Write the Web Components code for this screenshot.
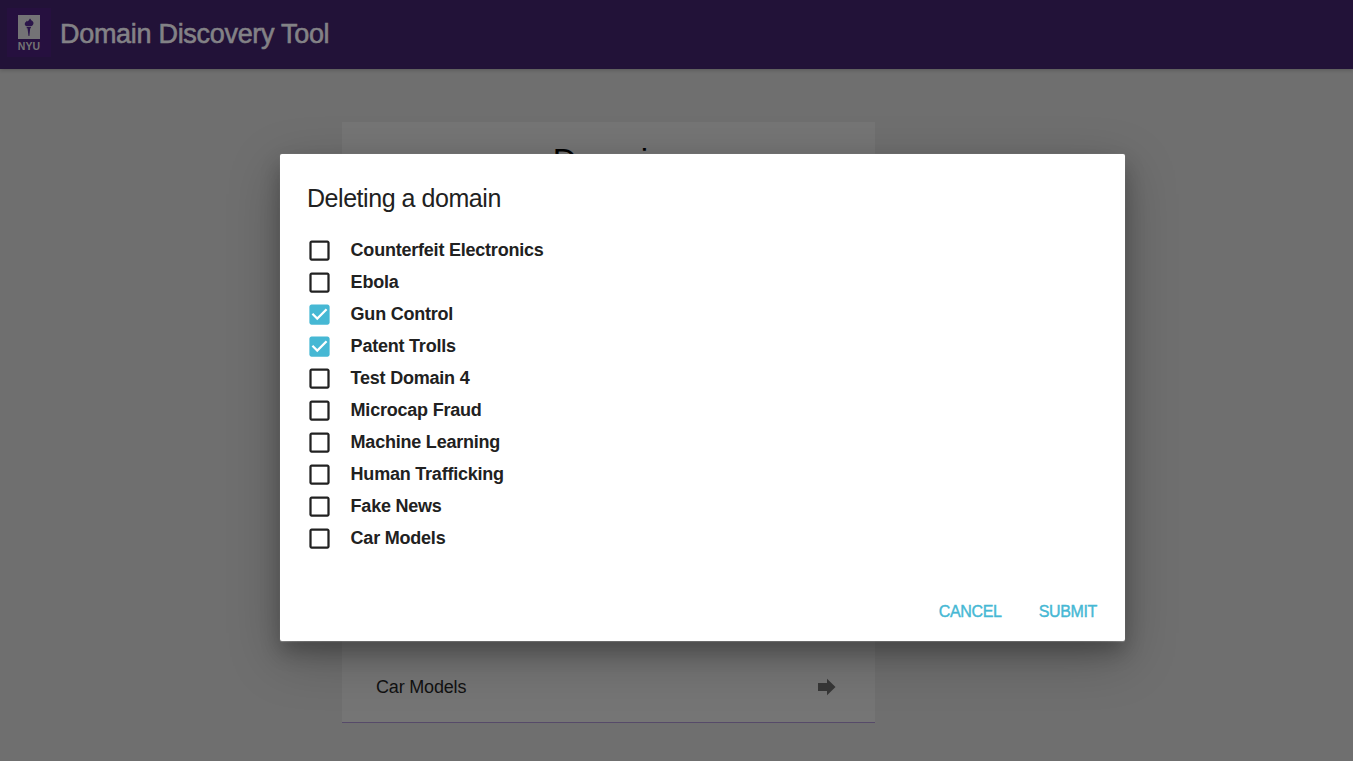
<!DOCTYPE html>
<html lang="en">
<head>
<meta charset="utf-8">
<title>Domain Discovery Tool</title>
<style>
html,body{margin:0;height:100%;overflow:hidden}
body{font-family:"Liberation Sans",Arial,sans-serif}
</style>
</head>
<body>
<ddt-app></ddt-app>
<script>
const define = (name, html, setup) => customElements.define(name, class extends HTMLElement {
  constructor() {
    super();
    const t = document.createElement('template');
    t.innerHTML = html;
    this.attachShadow({mode: 'open'}).append(t.content.cloneNode(true));
  }
  connectedCallback() { if (setup) setup(this); }
});

define('nyu-logo', `
<style>
:host{display:flex;flex-direction:column;align-items:center;width:44px;height:49px;box-sizing:border-box;padding-top:7px;background:#26103f}
svg{display:block;width:22px;height:24px}
span{font:bold 10.500px/12px "Liberation Sans",Arial,sans-serif;color:#757575;margin-top:1px;letter-spacing:.1px}
</style>
<svg viewBox="0 0 22 24"><rect width="22" height="24" fill="#747376"/><path d="M12 3.500c1.200 1 .800 1.800 1.800 2 1.200.900 2 1.900 1.600 3.300-.300 1.500-1.500 2.200-2.600 2.500H8.600C7.100 10.800 6.300 9.300 7 7.900c.500-1 1.300-1 1.700-2.200.600.200.800.500.900.9.900-.900 1.400-1.700 2.400-3.100zM8.700 12h4.200v1.300h-.7L11.400 21h-.9l-1-7.700h-.8z" fill="#2b154a"/></svg>
<span>NYU</span>`);

define('app-header', `
<style>
:host{display:flex;height:69px;box-sizing:border-box;padding:8px 0 0 7px;background:#221238;box-shadow:0 1px 4px rgba(0,0,0,.22);position:relative}
h1{margin:9px 0 0 9px;font-size:27px;line-height:35px;font-weight:400;color:#838286;letter-spacing:-.3px;-webkit-text-stroke:.6px #838286;white-space:nowrap}
</style>
<nyu-logo></nyu-logo><h1><slot></slot></h1>`);

define('domain-row', `
<style>
:host{display:flex;align-items:center;justify-content:space-between;height:54px;padding:0 39px 0 34px;font-size:18px;color:#111;letter-spacing:-.18px}
svg{display:block;width:18px;height:18px}
</style>
<slot></slot>
<svg viewBox="0 0 18 18"><path d="M0 5h9V.8L17.500 9 9 17.200V13H0z" fill="#373737"/></svg>`);

define('domain-card', `
<style>
:host{display:flex;flex-direction:column;justify-content:space-between;width:533px;height:601px;box-sizing:border-box;margin:53px 0 0 342px;padding-bottom:8px;background:#757575;border-bottom:1px solid #564a69}
h2{margin:20px 0 0 2px;text-align:center;font-size:33px;line-height:38px;font-weight:400;color:#000}
</style>
<h2>Domain</h2><div><slot></slot></div>`);

define('check-item', `
<style>
:host{display:flex;align-items:center;height:32px;font-size:18px;font-weight:700;color:#212121;letter-spacing:-.22px;white-space:nowrap}
svg{display:block;width:27px;height:27px;margin-right:17.600px;fill:#212121}
.on{display:none;fill:#46b8d4}
:host([checked]) .on{display:block}
:host([checked]) .off{display:none}
</style>
<svg class="off" viewBox="0 0 24 24"><path d="M19 5v14H5V5h14m0-2H5c-1.100 0-2 .9-2 2v14c0 1.100.9 2 2 2h14c1.100 0 2-.9 2-2V5c0-1.100-.9-2-2-2z"/></svg>
<svg class="on" viewBox="0 0 24 24"><path d="M19 3H5c-1.110 0-2 .9-2 2v14c0 1.100.890 2 2 2h14c1.110 0 2-.9 2-2V5c0-1.100-.890-2-2-2zm-9 14l-5-5 1.410-1.410L10 14.170l7.590-7.590L19 8l-9 9z"/></svg>
<slot></slot>`);

define('flat-button', `
<style>
:host{display:block;font-size:16px;line-height:20px;color:#46b8d4;letter-spacing:-.35px;-webkit-text-stroke:.4px #46b8d4}
</style><slot></slot>`);

define('modal-dialog', `
<style>
:host{position:absolute;left:280px;top:154px;width:845px;height:487px;box-sizing:border-box;display:flex;flex-direction:column;background:#fff;border-radius:2px;padding:27px 28px 19px 26px;box-shadow:0 16px 51px rgba(0,0,0,.25),0 11px 20px rgba(0,0,0,.22),0 .5px 1px rgba(255,255,255,.35)}
h3{margin:0 0 19px 1px;font-size:25px;line-height:34px;font-weight:400;color:#212121;letter-spacing:-.45px}
footer{display:flex;justify-content:flex-end;gap:37px;margin-top:auto}
</style>
<h3>Deleting a domain</h3>
<div><slot></slot></div>
<footer><flat-button>CANCEL</flat-button><flat-button>SUBMIT</flat-button></footer>`);

define('ddt-app', `
<style>
:host{display:block;position:relative;width:100%;height:761px;overflow:hidden;background:#6f6f6f}
</style>
<app-header>Domain Discovery Tool</app-header>
<domain-card>
<domain-row>Fake News</domain-row>
<domain-row>Car Models</domain-row>
</domain-card>
<modal-dialog></modal-dialog>`, el => {
  const items = ['Counterfeit Electronics','Ebola','Gun Control','Patent Trolls','Test Domain 4','Microcap Fraud','Machine Learning','Human Trafficking','Fake News','Car Models'];
  const dialog = el.shadowRoot.querySelector('modal-dialog');
  for (const name of items) {
    const item = document.createElement('check-item');
    item.textContent = name;
    if (name === 'Gun Control' || name === 'Patent Trolls') item.setAttribute('checked', '');
    dialog.append(item);
  }
});
</script>
</body>
</html>
